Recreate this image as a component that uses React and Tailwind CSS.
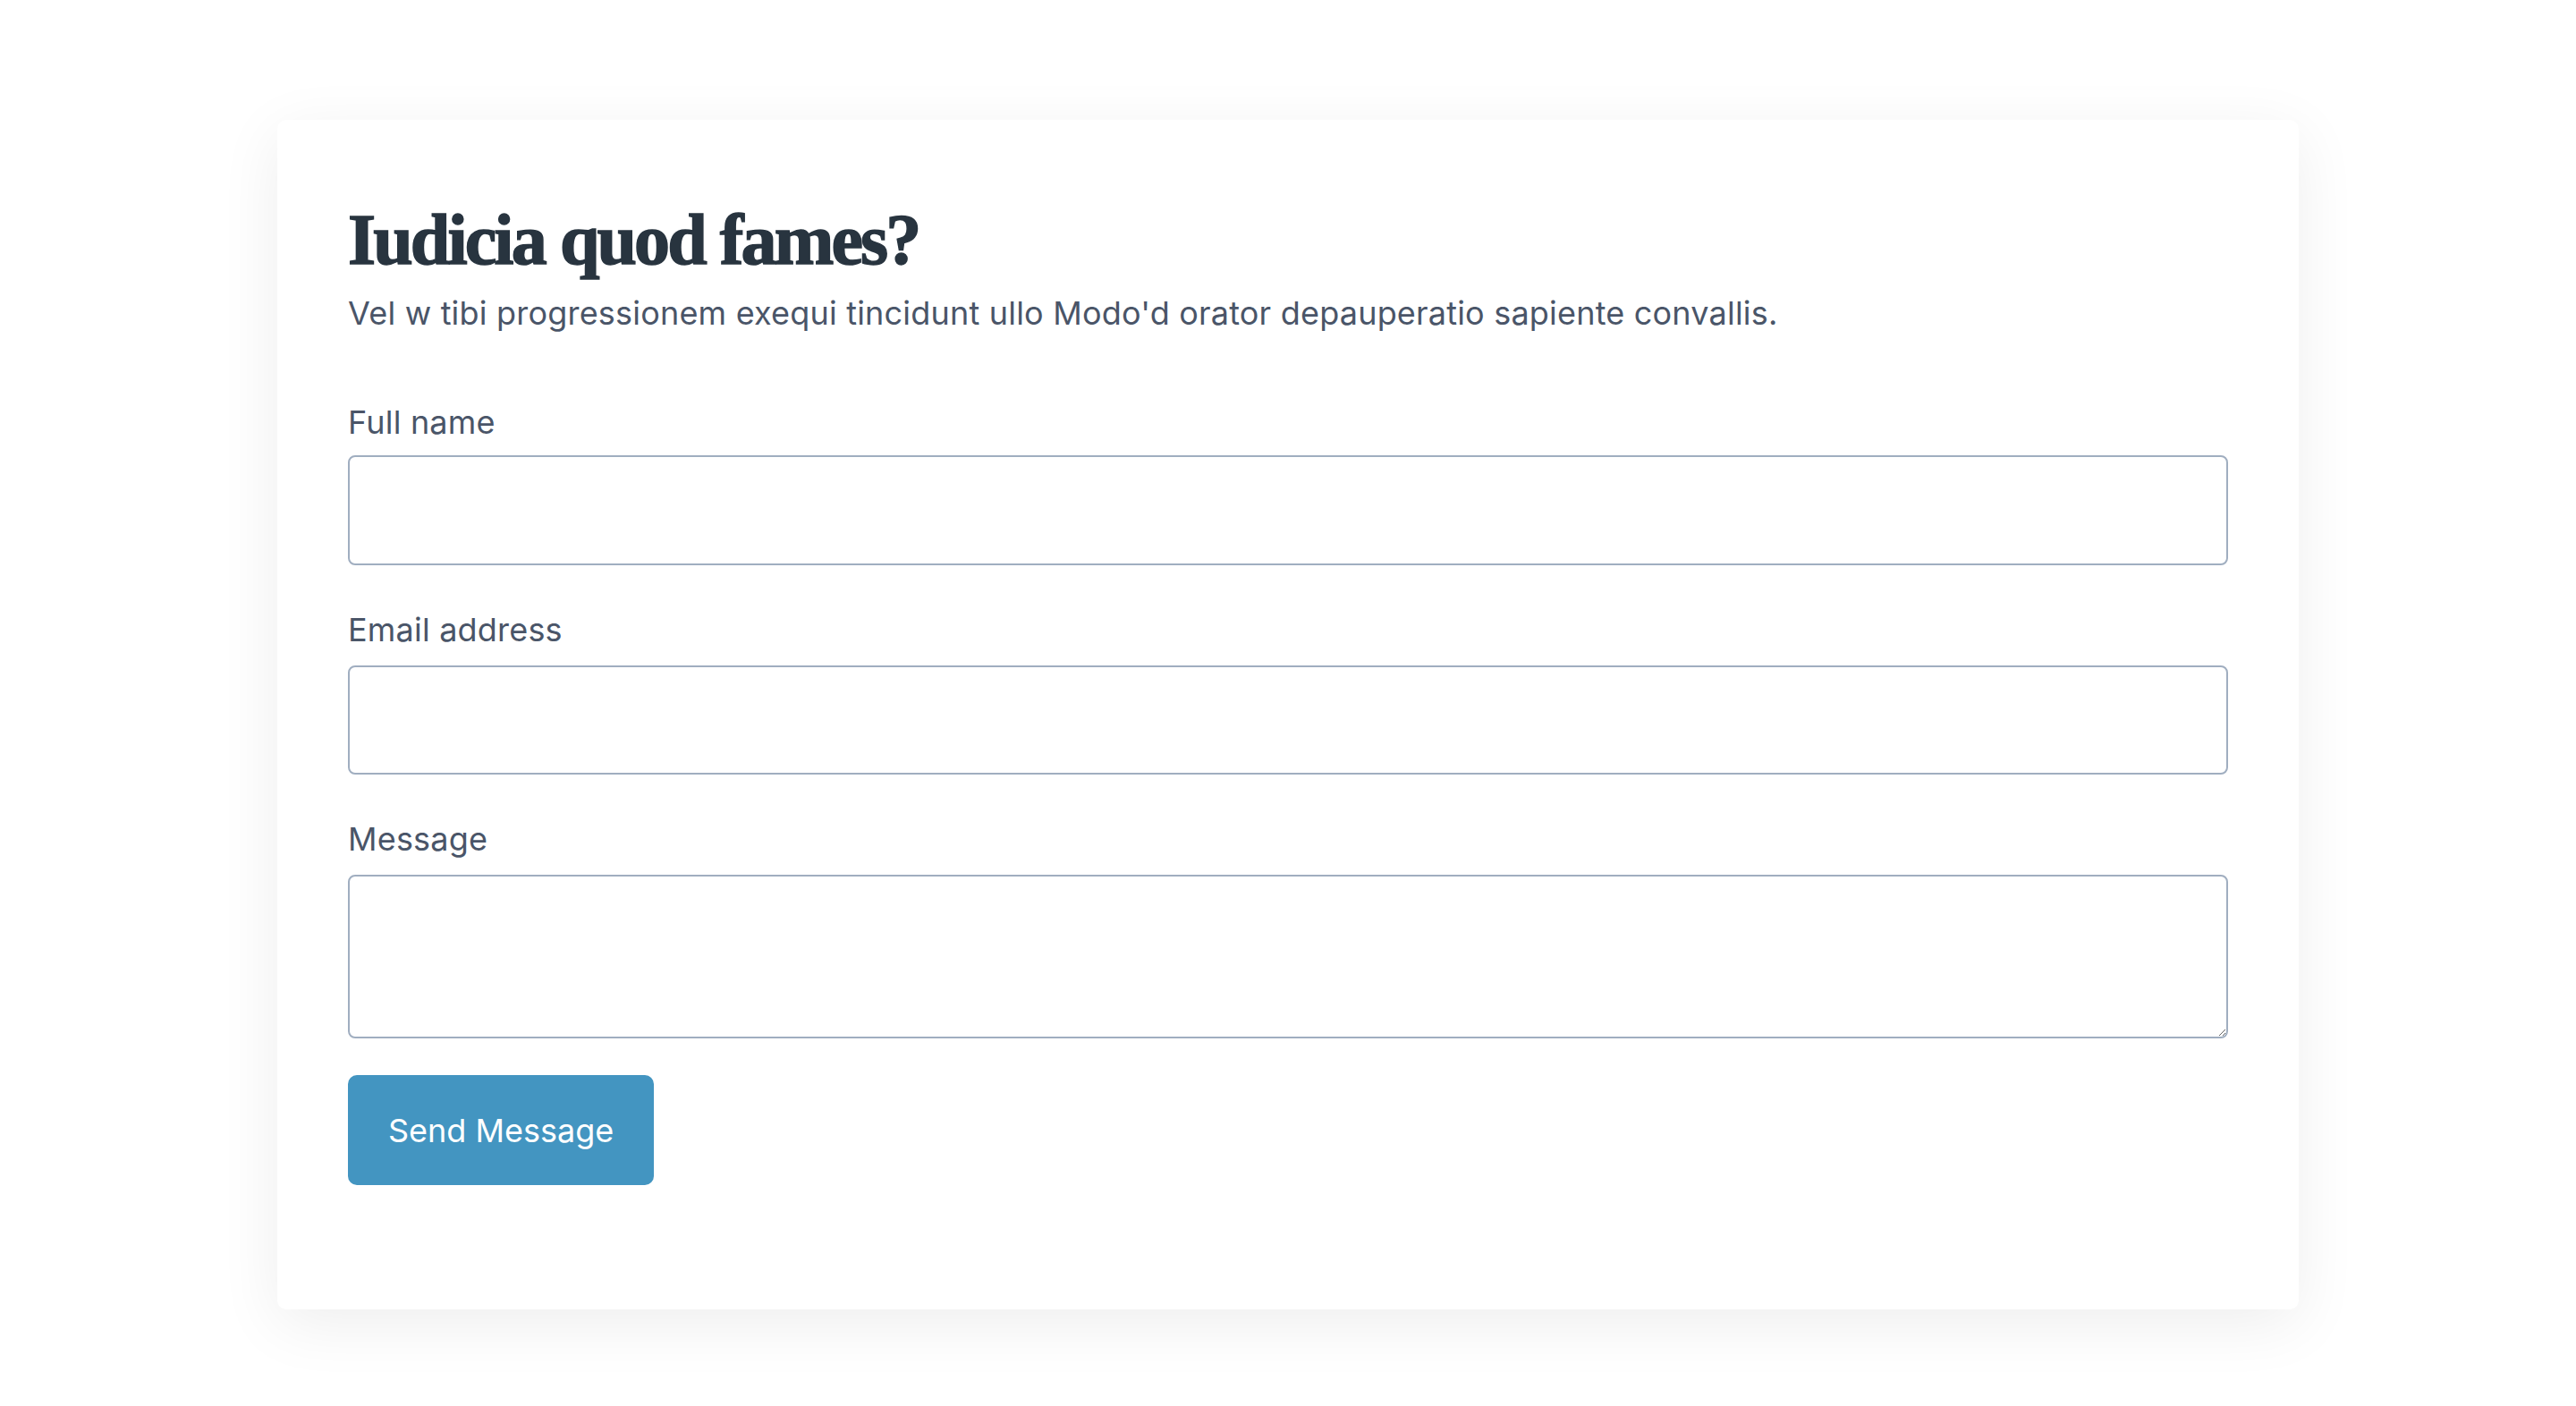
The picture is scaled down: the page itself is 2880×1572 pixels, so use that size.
export default function App() {
  return (
    <div className="min-h-screen bg-white pt-[134px] pb-[100px] font-['Inter','Noto_Sans',sans-serif]">
      <div className="mx-auto w-[2260px] rounded-[10px] bg-white px-[79px] pt-[92px] pb-[139px] shadow-[0_16px_70px_rgba(0,0,0,0.07)]">
        <h1 className="font-['Liberation_Serif','Times_New_Roman',serif] text-[80px] font-bold leading-[84px] tracking-[-2.9px] text-[#28343f] [-webkit-text-stroke:1.5px_#28343f]">
          Iudicia quod fames?
        </h1>
        <p className="mt-[13px] text-[36px] leading-[54px] tracking-[0.2px] text-[#4a5568]">
          Vel w tibi progressionem exequi tincidunt ullo Modo'd orator depauperatio sapiente convallis.
        </p>

        <form className="mt-[68px]" onSubmit={(e) => e.preventDefault()}>
          <label className="block text-[36px] leading-[54px] tracking-[0.2px] text-[#4a5568]">Full name</label>
          <input
            type="text"
            className="mt-[10px] block h-[123px] w-full rounded-[8px] border-2 border-[#a0aec0] bg-white px-6 text-[36px] outline-none"
          />

          <label className="mt-[45px] block text-[36px] leading-[54px] tracking-[0.2px] text-[#4a5568]">Email address</label>
          <input
            type="email"
            className="mt-[13px] block h-[122px] w-full rounded-[8px] border-2 border-[#a0aec0] bg-white px-6 text-[36px] outline-none"
          />

          <label className="mt-[45px] block text-[36px] leading-[54px] tracking-[0.2px] text-[#4a5568]">Message</label>
          <textarea className="mt-[13px] block h-[183px] w-full rounded-[8px] border-2 border-[#a0aec0] bg-white px-6 py-4 text-[36px] outline-none" />

          <button
            type="submit"
            className="mt-[41px] h-[123px] rounded-[10px] bg-[#4395c1] px-[45px] text-[36px] text-white"
          >
            Send Message
          </button>
        </form>
      </div>
    </div>
  );
}
